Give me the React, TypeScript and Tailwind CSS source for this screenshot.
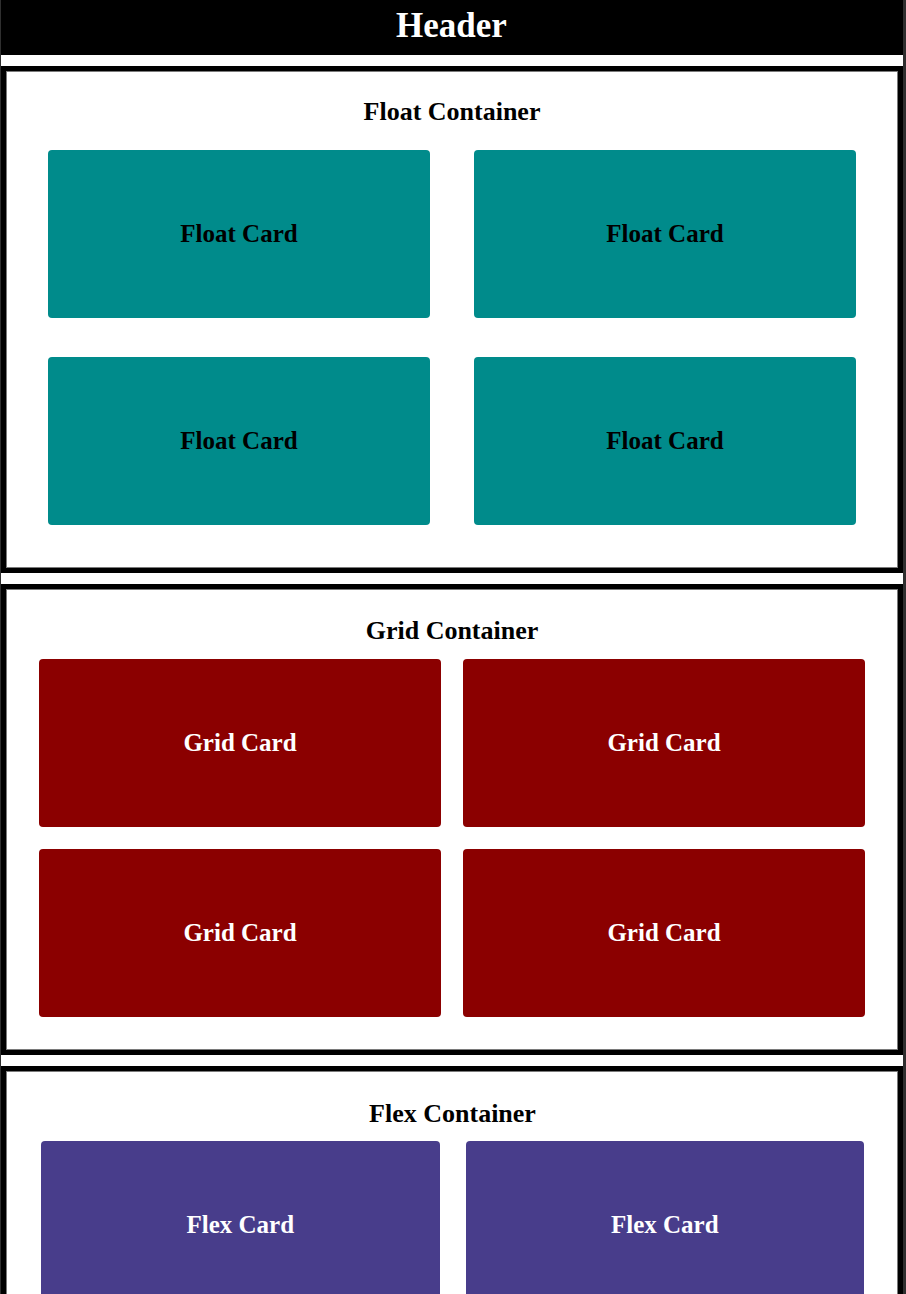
import React from "react";

const serif = { fontFamily: '"Liberation Serif", "Times New Roman", serif' };

function Section({
  title,
  children,
  className,
}: {
  title: string;
  children: React.ReactNode;
  className?: string;
}) {
  return (
    <div className="mt-[11px] border-[5px] border-black">
      <div className={"border border-[#7a7a7a] bg-white " + (className ?? "")}>
        <h2 className="h-[30px] flex items-center justify-center text-[26px] font-bold text-black leading-none">
          {title}
        </h2>
        {children}
      </div>
    </div>
  );
}

export default function App() {
  return (
    <div className="min-h-[1294px] bg-[#2f2f2f] pl-[1px] pr-[3px]" style={serif}>
      <div className="bg-white min-h-[1294px]">
        <header className="h-[55px] bg-black flex items-center justify-center pb-[4px]">
          <h1 className="text-[35px] font-bold text-white leading-none -ml-[1px]">Header</h1>
        </header>

        <Section title="Float Container" className="pt-[25px] pb-[42px]">
          <div className="mt-[23px] grid grid-cols-[382px_382px] justify-center gap-x-[44px] gap-y-[39px]">
            {[0, 1, 2, 3].map((i) => (
              <div
                key={i}
                className="h-[168px] rounded-[4px] bg-[#008b8b] flex items-center justify-center text-[25px] font-bold text-black"
              >
                Float Card
              </div>
            ))}
          </div>
        </Section>

        <Section title="Grid Container" className="pt-[26px] pb-[32px] px-[32px]">
          <div className="mt-[13px] grid grid-cols-2 gap-[22px]">
            {[0, 1, 2, 3].map((i) => (
              <div
                key={i}
                className="h-[168px] rounded-[4px] bg-[#8b0000] flex items-center justify-center text-[25px] font-bold text-white"
              >
                Grid Card
              </div>
            ))}
          </div>
        </Section>

        <Section title="Flex Container" className="pt-[27px] pb-[31px] pl-[34px] pr-[33px]">
          <div className="mt-[12px] flex flex-wrap gap-[26px]">
            {[0, 1, 2, 3].map((i) => (
              <div
                key={i}
                className="h-[168px] flex-1 basis-[calc(50%-13px)] rounded-[4px] bg-[#483d8b] flex items-center justify-center text-[25px] font-bold text-white"
              >
                Flex Card
              </div>
            ))}
          </div>
        </Section>
      </div>
    </div>
  );
}
